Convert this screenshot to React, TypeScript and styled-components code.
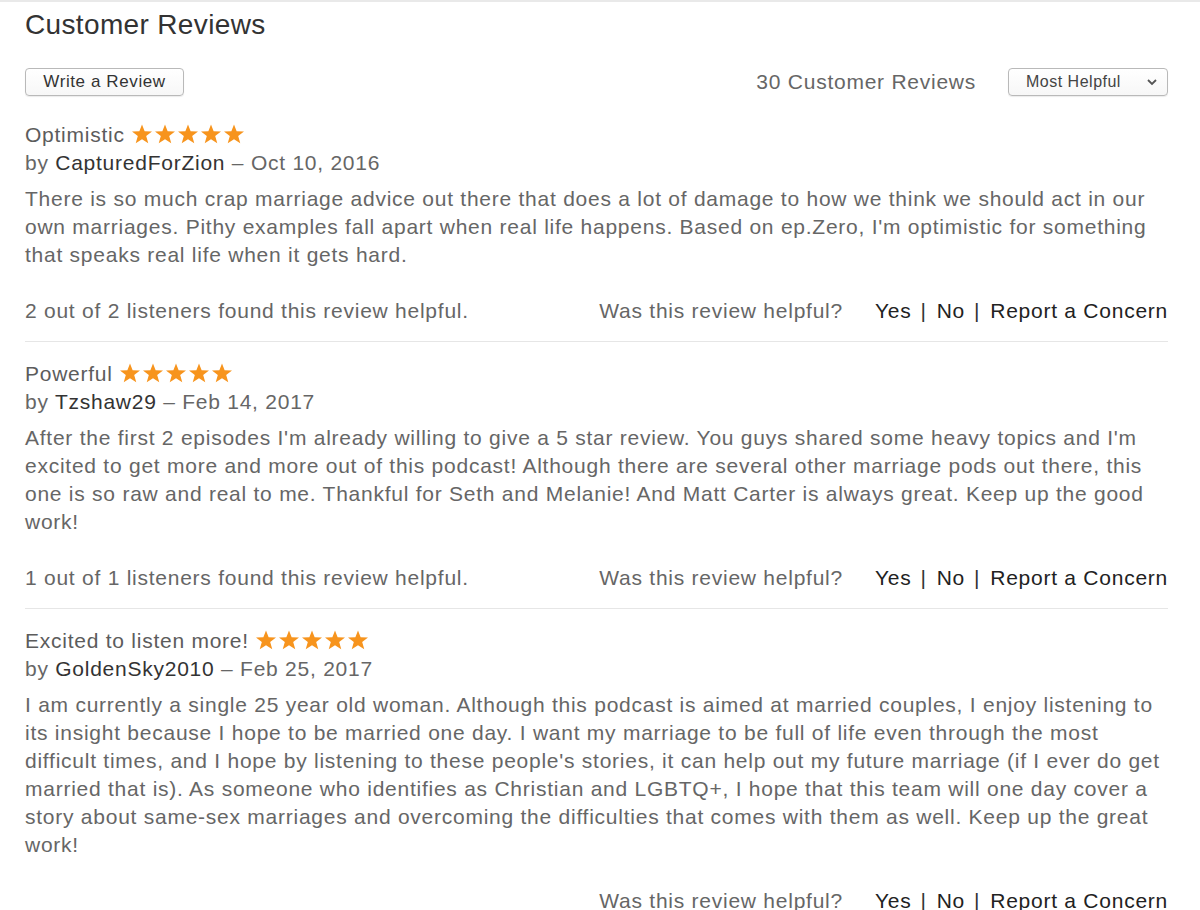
import React from "react";
import styled, { createGlobalStyle } from "styled-components";

const GlobalStyle = createGlobalStyle`
    html, body {
        margin: 0;
        padding: 0;
        background: #fff;
    }
    body {
        font-family: "Liberation Sans", Arial, sans-serif;
        -webkit-font-smoothing: antialiased;
    }
`;

const Page = styled.div`
    border-top: 2px solid #e9e9e9;
    padding: 0 32px 0 25px;
    width: 1200px;
    box-sizing: border-box;
`;

const Heading = styled.h1`
    margin: 7px 0 0;
    font-size: 28px;
    letter-spacing: 0.35px;
    line-height: 32px;
    font-weight: normal;
    color: #333;
`;

const Toolbar = styled.div`
    display: flex;
    align-items: center;
    margin-top: 27px;
    height: 28px;
`;

const Button = styled.button`
    height: 28px;
    width: 159px;
    border: 1px solid #b9b9b9;
    border-radius: 4px;
    background: linear-gradient(#fff, #f7f7f7);
    box-shadow: 0 1px 1px rgba(0, 0, 0, 0.08);
    font-family: inherit;
    font-size: 17px;
    letter-spacing: 0.6px;
    color: #333;
    padding: 0;
`;

const Count = styled.span`
    margin-left: auto;
    margin-right: 32px;
    font-size: 21px;
    letter-spacing: 0.75px;
    color: #666;
`;

const Select = styled.div`
    width: 160px;
    height: 28px;
    box-sizing: border-box;
    border: 1px solid #b9b9b9;
    border-radius: 4px;
    background: linear-gradient(#fff, #f7f7f7);
    box-shadow: 0 1px 1px rgba(0, 0, 0, 0.08);
    display: flex;
    align-items: center;
    justify-content: space-between;
    padding: 0 9px 0 17px;
    font-size: 16px;
    letter-spacing: 0.5px;
    color: #444;
`;

const ReviewItem = styled.article<{ $first?: boolean; $last?: boolean }>`
    margin-top: ${p => (p.$first ? "25px" : "18px")};
    padding-bottom: ${p => (p.$last ? "0" : "16px")};
    border-bottom: ${p => (p.$last ? "none" : "1px solid #e6e6e6")};
`;

const Line = styled.div`
    font-size: 21px;
    letter-spacing: 0.75px;
    line-height: 28px;
    color: #666;
`;

const TitleLine = styled(Line)`
    display: flex;
    align-items: center;
    color: #5c5c5c;
`;

const Stars = styled.span`
    display: inline-flex;
    gap: 1px;
    margin-left: 6px;
    margin-top: -2px;
`;

const Author = styled.span`
    color: #333;
`;

const Body = styled.p`
    margin: 8px 0 0;
    font-size: 21px;
    letter-spacing: 0.75px;
    line-height: 28px;
    color: #666;
`;

const HelpfulRow = styled.div`
    display: flex;
    align-items: center;
    margin-top: 28px;
    font-size: 21px;
    letter-spacing: 0.75px;
    line-height: 28px;
    color: #666;
`;

const Actions = styled.div`
    margin-left: auto;
    display: flex;
    align-items: center;
`;

const Ask = styled.span`
    margin-right: 32px;
`;

const Link = styled.span`
    color: #222;
`;

const Sep = styled.span`
    color: #333;
    margin: 0 10px 0 9px;
`;

const Star = () => (
    <svg width="22" height="20" viewBox="0 0 24 22">
        <polygon
            points="12,0.5 14.9,8 23,8.3 16.6,13.3 18.9,21.3 12,16.7 5.1,21.3 7.4,13.3 1,8.3 9.1,8"
            fill="#f7941d"
        />
    </svg>
);

const Chevron = () => (
    <svg width="12" height="8" viewBox="0 0 12 8">
        <path d="M2 2 L6 6 L10 2" stroke="#555" strokeWidth="1.8" fill="none" />
    </svg>
);

const reviews = [
    {
        title: "Optimistic",
        author: "CapturedForZion",
        date: "Oct 10, 2016",
        text: "There is so much crap marriage advice out there that does a lot of damage to how we think we should act in our own marriages. Pithy examples fall apart when real life happens. Based on ep.Zero, I'm optimistic for something that speaks real life when it gets hard.",
        helpful: "2 out of 2 listeners found this review helpful.",
    },
    {
        title: "Powerful",
        author: "Tzshaw29",
        date: "Feb 14, 2017",
        text: "After the first 2 episodes I'm already willing to give a 5 star review. You guys shared some heavy topics and I'm excited to get more and more out of this podcast! Although there are several other marriage pods out there, this one is so raw and real to me. Thankful for Seth and Melanie! And Matt Carter is always great. Keep up the good work!",
        helpful: "1 out of 1 listeners found this review helpful.",
    },
    {
        title: "Excited to listen more!",
        author: "GoldenSky2010",
        date: "Feb 25, 2017",
        text: "I am currently a single 25 year old woman. Although this podcast is aimed at married couples, I enjoy listening to its insight because I hope to be married one day. I want my marriage to be full of life even through the most difficult times, and I hope by listening to these people's stories, it can help out my future marriage (if I ever do get married that is). As someone who identifies as Christian and LGBTQ+, I hope that this team will one day cover a story about same-sex marriages and overcoming the difficulties that comes with them as well. Keep up the great work!",
        helpful: "",
    },
];

export default function App() {
    return (
        <Page>
            <GlobalStyle />
            <Heading>Customer Reviews</Heading>
            <Toolbar>
                <Button>Write a Review</Button>
                <Count>30 Customer Reviews</Count>
                <Select>
                    <span>Most Helpful</span>
                    <Chevron />
                </Select>
            </Toolbar>
            {reviews.map((r, i) => (
                <ReviewItem key={r.author} $first={i === 0} $last={i === reviews.length - 1}>
                    <TitleLine>
                        {r.title}
                        <Stars>
                            {[0, 1, 2, 3, 4].map(n => (
                                <Star key={n} />
                            ))}
                        </Stars>
                    </TitleLine>
                    <Line>
                        by <Author>{r.author}</Author> – {r.date}
                    </Line>
                    <Body>{r.text}</Body>
                    <HelpfulRow>
                        <span>{r.helpful}</span>
                        <Actions>
                            <Ask>Was this review helpful?</Ask>
                            <Link>Yes</Link>
                            <Sep>|</Sep>
                            <Link>No</Link>
                            <Sep>|</Sep>
                            <Link>Report a Concern</Link>
                        </Actions>
                    </HelpfulRow>
                </ReviewItem>
            ))}
        </Page>
    );
}
